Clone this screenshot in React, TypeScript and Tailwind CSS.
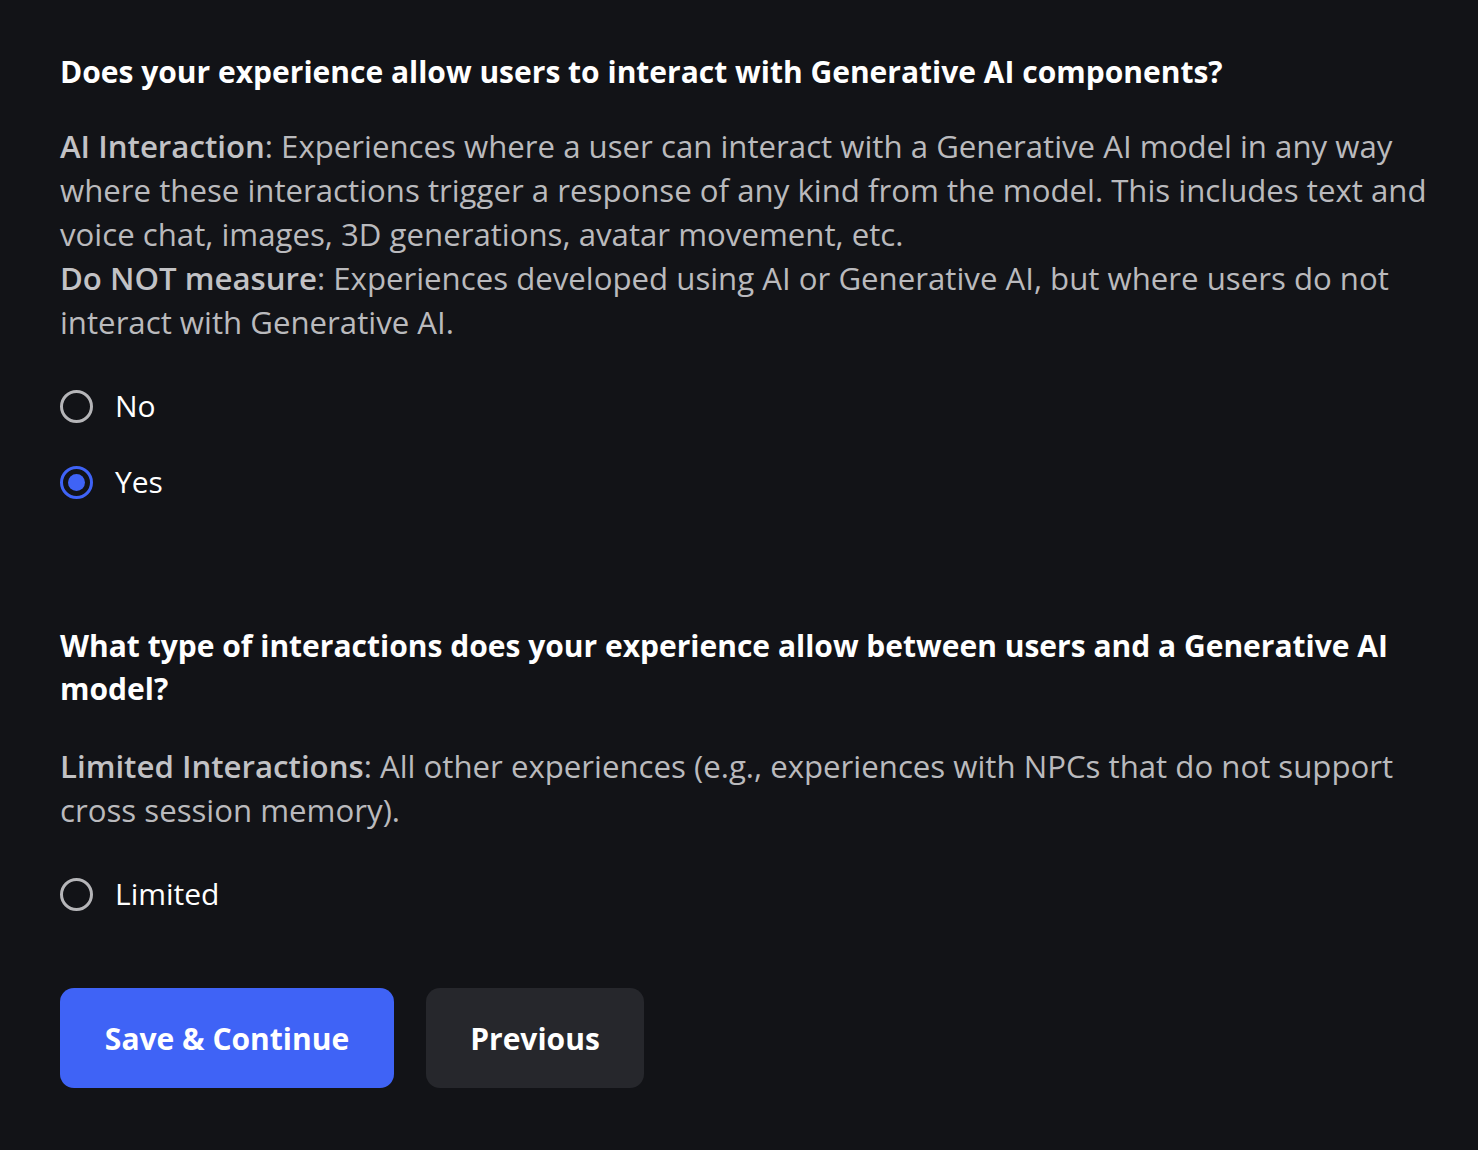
import React, { useState } from "react";

interface RadioOptionProps {
  label: string;
  checked: boolean;
  onSelect: () => void;
}

const RadioOption: React.FC<RadioOptionProps> = ({ label, checked, onSelect }) => (
  <button onClick={onSelect} className="flex items-center gap-[22px] h-[44px]">
    <span
      className={`flex items-center justify-center w-[33px] h-[33px] rounded-full border-[3px] ${
        checked ? "border-[#3f63f6]" : "border-[#b5b5b8]"
      }`}
    >
      {checked && <span className="w-[17px] h-[17px] rounded-full bg-[#3f63f6]" />}
    </span>
    <span className="text-[30px] text-white leading-none">{label}</span>
  </button>
);

export default function App() {
  const [aiInteract, setAiInteract] = useState("yes");
  const [kind, setKind] = useState("");

  return (
    <div
      className="min-h-[1150px] bg-[#121317] pl-[60px] pr-[16px] pt-[50px]"
      style={{ fontFamily: "'Open Sans', 'Noto Sans', sans-serif" }}
    >
      <h2 className="text-[30px] font-bold text-white leading-[43px]">
        Does your experience allow users to interact with Generative AI components?
      </h2>
      <div className="mt-[31px] text-[31.2px] leading-[44px] text-[#bababd]">
        <p>
          <span className="font-semibold text-[#c2c2c5]">AI Interaction</span>: Experiences where a
          user can interact with a Generative AI model in any way
          <br />
          where these interactions trigger a response of any kind from the model. This includes text and
          <br />
          voice chat, images, 3D generations, avatar movement, etc.
        </p>
        <p>
          <span className="font-semibold text-[#c2c2c5]">Do NOT measure</span>: Experiences developed
          using AI or Generative AI, but where users do not
          <br />
          interact with Generative AI.
        </p>
      </div>
      <div className="mt-[40px] flex flex-col gap-[32px] items-start">
        <RadioOption label="No" checked={aiInteract === "no"} onSelect={() => setAiInteract("no")} />
        <RadioOption label="Yes" checked={aiInteract === "yes"} onSelect={() => setAiInteract("yes")} />
      </div>

      <h2 className="mt-[120px] text-[30px] font-bold text-white leading-[43px]">
        What type of interactions does your experience allow between users and a Generative AI
        <br />
        model?
      </h2>
      <p className="mt-[34px] text-[31.2px] leading-[44px] text-[#bababd]">
        <span className="font-semibold text-[#c2c2c5]">Limited Interactions</span>: All other
        experiences (e.g., experiences with NPCs that do not support
        <br />
        cross session memory).
      </p>
      <div className="mt-[40px] flex flex-col items-start">
        <RadioOption label="Limited" checked={kind === "limited"} onSelect={() => setKind("limited")} />
      </div>

      <div className="mt-[72px] flex gap-[32px]">
        <button className="w-[334px] h-[100px] rounded-[14px] bg-[#3f63f6] text-white text-[30px] font-bold">
          Save &amp; Continue
        </button>
        <button className="w-[218px] h-[100px] rounded-[14px] bg-[#26272c] text-white text-[30px] font-bold">
          Previous
        </button>
      </div>
    </div>
  );
}
